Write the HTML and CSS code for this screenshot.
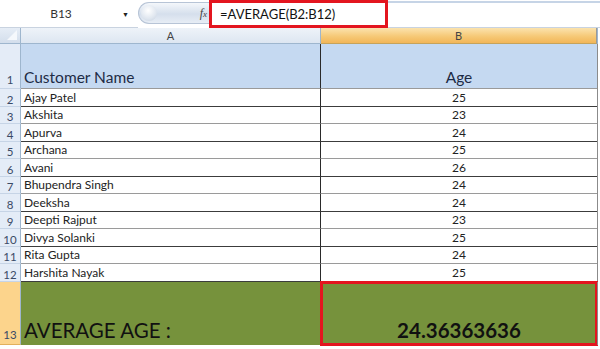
FILE: index.html
```html
<!DOCTYPE html>
<html lang="en">
<head>
  <meta charset="UTF-8" />
  <title>Average Age</title>
  <link rel="stylesheet" href="styles.css">
</head>
<body>
  <div class="formula-bar">
    <div class="name-box">
      <span class="cell-ref">B13</span>
      <span class="drop">&#9660;</span>
    </div>
    <div class="pill"><span class="knob"></span><span class="fx">f<i>x</i></span></div>
    <div class="formula">=AVERAGE(B2:B12)</div>
    <div class="formula-rest"></div>
  </div>

  <div class="sheet">
    <div class="corner"><span class="tri"></span></div>
    <div class="col-head">A</div>
    <div class="col-head active">B</div>
    <div class="edge head-edge"></div>

    <div class="row-num tall">1</div>
    <div class="cell title">Customer Name</div>
    <div class="cell title center">Age</div>
    <div class="edge"></div>

    <div class="row-num">2</div><div class="cell">Ajay Patel</div><div class="cell center">25</div><div class="edge"></div>
    <div class="row-num">3</div><div class="cell">Akshita</div><div class="cell center">23</div><div class="edge"></div>
    <div class="row-num">4</div><div class="cell">Apurva</div><div class="cell center">24</div><div class="edge"></div>
    <div class="row-num">5</div><div class="cell">Archana</div><div class="cell center">25</div><div class="edge"></div>
    <div class="row-num">6</div><div class="cell">Avani</div><div class="cell center">26</div><div class="edge"></div>
    <div class="row-num">7</div><div class="cell">Bhupendra Singh</div><div class="cell center">24</div><div class="edge"></div>
    <div class="row-num">8</div><div class="cell">Deeksha</div><div class="cell center">24</div><div class="edge"></div>
    <div class="row-num">9</div><div class="cell">Deepti Rajput</div><div class="cell center">23</div><div class="edge"></div>
    <div class="row-num">10</div><div class="cell">Divya Solanki</div><div class="cell center">25</div><div class="edge"></div>
    <div class="row-num">11</div><div class="cell">Rita Gupta</div><div class="cell center">24</div><div class="edge"></div>
    <div class="row-num">12</div><div class="cell">Harshita Nayak</div><div class="cell center">25</div><div class="edge"></div>

    <div class="row-num active">13</div>
    <div class="cell total">AVERAGE AGE :</div>
    <div class="cell total center result">24.36363636</div>
    <div class="edge"></div>
  </div>
</body>
</html>
```

FILE: styles.css
```css
body {
  margin: 0;
  width: 600px;
  height: 349px;
  overflow: hidden;
  background: #fff;
  font-family: Lato, "Open Sans", sans-serif;
  color: #222;
}

/* formula bar */
.formula-bar {
  display: flex;
  height: 28px;
  background: #fff;
}
.name-box {
  width: 138px;
  display: flex;
  align-items: center;
  font-size: 12px;
  color: #333;
  border-bottom: 1px solid #c9d3e0;
  box-sizing: border-box;
}
.cell-ref {
  width: 122px;
  text-align: center;
}
.drop {
  font-size: 7px;
  color: #222;
}
.pill {
  width: 71px;
  height: 22px;
  margin-top: 2px;
  border-radius: 11px 0 0 11px;
  background: linear-gradient(#f4f7fb, #d5dfec 55%, #e7edf5);
  border: 1px solid #b7c4d6;
  border-right: none;
  box-sizing: border-box;
  display: flex;
  align-items: center;
  justify-content: space-between;
  padding: 0 2px 0 2px;
}
.knob {
  width: 16px;
  height: 16px;
  border-radius: 50%;
  background: radial-gradient(circle at 45% 35%, #fff, #dfe6ef 60%, #c3cedc);
}
.fx {
  font-family: "Liberation Serif", serif;
  font-style: italic;
  font-size: 12px;
  color: #444;
}
.fx i {
  font-size: 9px;
}
.formula {
  width: 179px;
  box-sizing: border-box;
  border: 3px solid #e3151f;
  padding: 3px 0 0 8px;
  font-size: 13px;
  color: #111;
}
.formula-rest {
  flex: 1;
  border-top: 2px solid #c6d4e6;
  border-bottom: 1px solid #c9d3e0;
  margin-top: 1px;
}

/* grid */
.sheet {
  display: grid;
  grid-template-columns: 21px 300px 276px 3px;
  grid-template-rows: 16px 45px repeat(11, 17.5px) 63px;
}
.corner {
  background: linear-gradient(#e6edf6, #d3deec);
  border-right: 1px solid #9eb6ce;
  border-bottom: 1px solid #9eb6ce;
  position: relative;
}
.tri {
  position: absolute;
  right: 3px;
  bottom: 3px;
  width: 0;
  height: 0;
  border-left: 10px solid transparent;
  border-bottom: 10px solid #f5f8fc;
}
.col-head {
  background: linear-gradient(#eef3f9, #dde6f1);
  border-right: 1px solid #9eb6ce;
  border-bottom: 1px solid #9eb6ce;
  font-size: 11px;
  color: #444;
  display: flex;
  align-items: center;
  justify-content: center;
}
.col-head.active {
  background: linear-gradient(#fbe3ae, #f6c977 55%, #f2b658);
  border-bottom-color: #c6a35a;
  border-right-color: #999;
}
.edge {
  background: #fff;
  border-left: 1px solid #8b8b8b;
}
.head-edge {
  border-left: 1px solid #9eb6ce;
}
.row-num {
  background: #e4ecf7;
  border-right: 1px solid #9eb6ce;
  border-bottom: 1px solid #c6d4e6;
  font-size: 11.5px;
  color: #3a4a66;
  display: flex;
  align-items: flex-end;
  justify-content: center;
  box-sizing: border-box;
}
.row-num.tall {
  padding-bottom: 2px;
}
.row-num.active {
  background: #fcd48c;
  border-bottom-color: #e2b05c;
  padding-bottom: 3px;
}
.cell {
  background: #fff;
  border-bottom: 1px solid #9a9a9a;
  font-size: 12px;
  display: flex;
  align-items: flex-end;
  padding: 0 0 1px 3px;
  box-sizing: border-box;
  white-space: nowrap;
}
.cell:nth-child(8n+2), .cell:nth-child(8n+3) {
  border-bottom-color: #3c3c3c;
}
.cell:nth-child(4n+2) {
  border-right: 1px solid #2a2a2a;
}
.center {
  justify-content: center;
  padding-left: 0;
}
.title {
  background: #c5d9f1;
  font-size: 15.5px;
  color: #1d2b45;
  padding-bottom: 2px;
}
.total {
  background: #76923c;
  border-bottom: none;
  font-size: 20.5px;
  color: #111;
  padding-bottom: 3px;
}
.result {
  font-weight: bold;
  outline: 3px solid #e3151f;
  outline-offset: -2px;
}
```
